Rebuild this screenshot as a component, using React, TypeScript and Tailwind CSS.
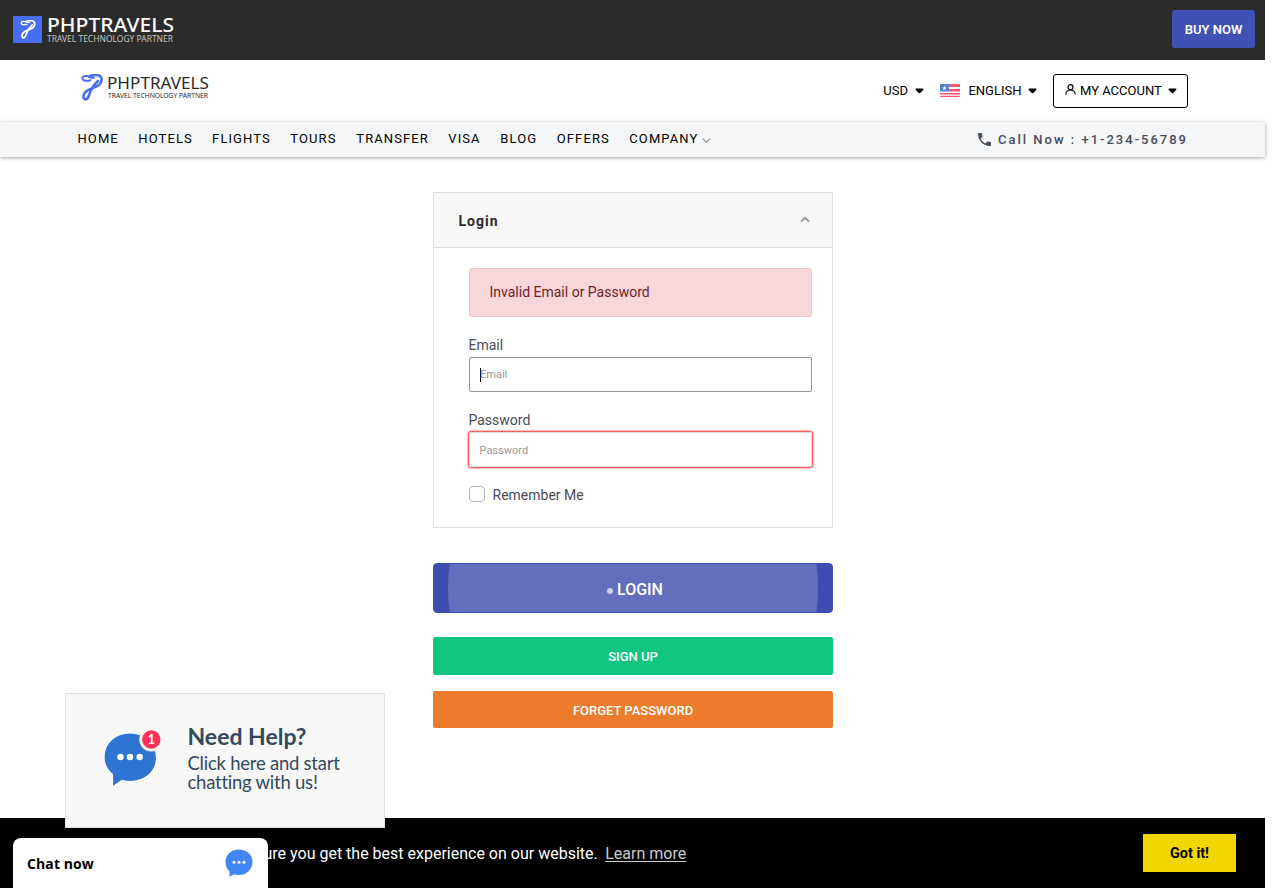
import React from "react";

const navItems = [
  { label: "HOME", left: "w-[60.8px]" },
  { label: "HOTELS", left: "w-[73.8px]" },
  { label: "FLIGHTS", left: "w-[78.2px]" },
  { label: "TOURS", left: "w-[66px]" },
  { label: "TRANSFER", left: "w-[92px]" },
  { label: "VISA", left: "w-[52px]" },
  { label: "BLOG", left: "w-[56.500px]" },
  { label: "OFFERS", left: "w-[72.500px]" },
];

function LogoMark({ className }: { className: string }) {
  return (
    <svg viewBox="0 0 22 27" className={className} fill="none" stroke="currentColor" strokeLinecap="round" strokeLinejoin="round">
      <path d="M9.500 6.200C6.500 7 3.500 7.300 2 5.600C.3 3.500 2.500 1.600 5.300 2C8.500 2.500 10.500 4.300 13 3.700" strokeWidth="2" />
      <path d="M8.500 2.200C12 .9 17 .6 19.400 2.400C21.500 4.200 20.700 9 17.500 11.300C13.500 14.300 7.500 14.500 4.200 18.300C2 21 1.700 24.700 4 25.300C6.500 25.900 7.300 23.500 8.300 20.500C9.700 16 11.500 12 17 7" strokeWidth="2.600" />
    </svg>
  );
}

function Caret() {
  return (
    <svg className="h-[6px] w-[9px]" viewBox="0 0 9 6" fill="currentColor">
      <path d="M1.3.5h6.4c.8 0 1.1.8.5 1.4L5.2 5c-.4.4-1 .4-1.4 0L.8 1.900C.2 1.300.5.5 1.300.5z" />
    </svg>
  );
}

function Flag() {
  return (
    <svg className="mt-[-1px] h-[13px] w-5" viewBox="0 0 20 13">
      <rect width="20" height="13" rx="1" fill="#fff" />
      <path d="M0 1a1 1 0 0 1 1-1h18a1 1 0 0 1 1 1v2H0zM9 5h11v2.500H9zM0 9h20v1.600H0zM0 11.700h20v.3a1 1 0 0 1-1 1H1a1 1 0 0 1-1-1z" fill="#f55867" />
      <path d="M0 1a1 1 0 0 1 1-1h8v7.500H0z" fill="#4a86dc" />
      <path d="m4.500 1.700.7 1.700h1.700L5.500 4.400 6.100 6.200 4.500 5.100 2.900 6.200l.6-1.800L2.100 3.400h1.700z" fill="#fff" />
    </svg>
  );
}

export default function App() {
  return (
    <div className="relative flex h-[888px] w-[1282px] flex-col overflow-hidden bg-white font-['Roboto',sans-serif]">
      <header className="flex h-[60px] w-[1265px] shrink-0 items-center justify-between bg-[#2b2b2b] pr-[10px] pl-[13px]">
        <div className="mt-[-2px] flex items-center">
          <div className="flex h-[27px] w-[29px] items-center justify-center bg-[#466df2] text-white">
            <LogoMark className="h-[19px] w-[16px]" />
          </div>
          <svg className="ml-[5px] h-[36px] w-[130px]" viewBox="0 -5 130 36" fill="#fff" fontFamily="Noto Sans, sans-serif">
            <text x="0" y="16" fontSize="19" fontWeight="500" textLength="127" lengthAdjust="spacingAndGlyphs">PHPTRAVELS</text>
            <text x="0" y="26" fontSize="8" fill="#c4c4c4" textLength="126" lengthAdjust="spacingAndGlyphs">TRAVEL TECHNOLOGY PARTNER</text>
          </svg>
        </div>
        <button className="mt-[-2px] h-[38px] w-[83px] rounded-[3px] bg-[#3f51b5] pt-px text-[13px] font-semibold text-white">BUY NOW</button>
      </header>

      <div className="flex h-[62px] w-[1265px] shrink-0 items-center justify-between pr-[77px] pl-[81px] text-[13px] text-black">
        <div className="mt-[-8px] flex items-center">
          <LogoMark className="h-[27px] w-[22px] text-[#466df2]" />
          <svg className="ml-[4px] h-[30px] w-[104px]" viewBox="0 0 104 30" fill="#2b2b2b" fontFamily="Noto Sans, sans-serif">
            <text x="0" y="17" fontSize="17" textLength="102" lengthAdjust="spacingAndGlyphs">PHPTRAVELS</text>
            <text x="1" y="26" fontSize="6.500" textLength="100" lengthAdjust="spacingAndGlyphs">TRAVEL TECHNOLOGY PARTNER</text>
          </svg>
        </div>
        <div className="flex items-center">
          <div className="flex items-center gap-[7px]"><span>USD</span><Caret /></div>
          <div className="ml-4 flex items-center"><Flag /><span className="mr-[6.500px] ml-[8.500px]">ENGLISH</span><Caret /></div>
          <button className="ml-4 flex h-[34px] w-[135px] items-center rounded-[3px] border border-black pl-[11px]">
            <svg className="mt-[-3px] mr-1 h-[11px] w-[11px]" viewBox="0 0 11 11" fill="none" stroke="currentColor" strokeWidth="1.200">
              <circle cx="5.500" cy="3.200" r="2.500" />
              <path d="M.8 10.500C.8 7.400 3 6 5.500 6s4.700 1.400 4.700 4.500" />
            </svg>
            <span className="mr-[6px] whitespace-nowrap">MY ACCOUNT</span><Caret />
          </button>
        </div>
      </div>

      <nav className="flex h-[35px] w-[1265px] shrink-0 items-center bg-[#f4f6f8] pr-[77px] pl-[77.500px] text-[13px] text-black shadow-[0_1px_4px_rgba(0,0,0,0.35)]">
        {navItems.map((item) => (
          <a key={item.label} className={`${item.left} mt-[-2px] shrink-0 tracking-[1.1px]`}>{item.label}</a>
        ))}
        <a className="mt-[-2px] flex items-center tracking-[1.1px]">
          COMPANY
          <svg className="mt-[3px] ml-[3.500px] h-[5px] w-[9px]" viewBox="0 0 9 5" fill="none" stroke="#999" strokeWidth="1.300"><path d="m.7.6 3.800 3.600L8.300.6" /></svg>
        </a>
        <div className="ml-auto flex items-center text-[#494b5b]">
          <svg className="mr-[7px] h-[13px] w-[13px]" viewBox="3 3 18 18" fill="currentColor"><path d="M6.620 10.790c1.440 2.830 3.760 5.140 6.590 6.590l2.200-2.200c.27-.27.67-.36 1.020-.24 1.120.37 2.330.57 3.570.57.55 0 1 .45 1 1V20c0 .55-.45 1-1 1C10.610 21 3 13.390 3 4c0-.55.45-1 1-1h3.500c.55 0 1 .45 1 1 0 1.250.2 2.450.57 3.570.11.35.03.74-.25 1.020z" /></svg>
          <span className="text-[13px] font-medium tracking-[2px]">Call Now : +1-234-56789</span>
        </div>
      </nav>

      <main className="ml-[433px] w-[400px] pt-[35px] text-sm text-[#494b5b]">
        <section className="h-[336px] border border-[#dfdfdf]">
          <div className="flex h-[55px] items-center justify-between border-b border-[#dfdfdf] bg-[#f7f7f7] pr-[22px] pl-[24.500px]">
            <h1 className="pt-[2px] text-[14px] font-bold tracking-[1px] text-[#2b2b2b]">Login</h1>
            <svg className="mt-[-1px] h-[7px] w-[10px]" viewBox="0 0 10 7" fill="none" stroke="#999" strokeWidth="2"><path d="m1 5.600 4-3.800 4 3.800" /></svg>
          </div>
          <div className="pt-5 pr-5 pl-[35px]">
            <div className="flex h-[49px] items-center rounded-[3px] border border-[#f5c6cb] bg-[#f8d7da] pb-[2px] pl-[19.500px] text-[#721c24]">Invalid Email or Password</div>
            <label className="mt-[17px] -ml-[0.5px] block h-[23px] leading-[23px]">Email</label>
            <div className="flex h-[35px] items-center rounded-[2px] border border-[#999] pt-px pl-[10px] text-[11px] text-[#999]">
              <span className="-mr-px h-[14px] w-px bg-black" />Email
            </div>
            <label className="mt-[17px] -ml-[0.5px] block h-[23px] leading-[23px]">Password</label>
            <div className="flex h-[35px] items-center rounded-[2px] border border-[#ddd] pt-[2px] pl-[9.500px] text-[11px] text-[#999] shadow-[0_0_2px_1px_#ff2222]">Password</div>
            <div className="mt-[18px] flex h-5 items-center gap-[7.500px]">
              <span className="mb-[2px] h-4 w-4 rounded-[4px] border border-[#adb5bd]" />
              <span>Remember Me</span>
            </div>
          </div>
        </section>
        <button className="mt-[35px] flex h-[50px] w-full items-center justify-center overflow-hidden rounded-[4px] border border-[#3f51b5] bg-[#3d4db0] text-[16px] font-medium text-white">
          <span className="flex h-[370px] w-[370px] shrink-0 items-center justify-center rounded-full bg-[#636fbc] pl-[4px]">
            <span className="mt-[5px] mr-1 h-[6px] w-[6px] rounded-full bg-[#cbd0ea]" /><span className="pt-[4px]">LOGIN</span>
          </span>
        </button>
        <button className="mt-6 block h-[38px] w-full rounded-[2px] bg-[#11c581] pt-[2px] text-[13px] font-medium text-white">SIGN UP</button>
        <button className="mt-4 block h-[37px] w-full rounded-[2px] bg-[#ec7b2d] pt-[3px] text-[13px] font-medium text-white">FORGET PASSWORD</button>
      </main>

      <footer className="absolute bottom-0 left-0 flex h-[70px] w-[1265px] items-center bg-black pr-[29px] pl-[263.500px] text-[16px] text-white">
        <p className="pt-[2px]">ure you get the best experience on our website.</p>
        <a className="ml-[7.500px] pt-[2px] text-[#ccc] underline underline-offset-2">Learn more</a>
        <button className="ml-auto h-[38px] w-[93px] bg-[#f1d600] pt-px text-[14.400px] font-bold text-black">Got it!</button>
      </footer>

      <aside className="absolute top-[693px] left-[65px] flex h-[135px] w-[320px] border border-[#e0e0e0] bg-[#f7f7f7] font-['Lato',sans-serif] text-[#34495e]">
        <svg className="mt-[34px] ml-[37px] h-[62px] w-[62px]" viewBox="0 0 62 62">
          <path d="M27 5C42 5 53.500 15 53.500 29.500S42 53.500 27 53.500c-3 0-5.500-.4-8-1.200L9.500 59V46.500C4 42 1 36.500 1 29.500 1 15 12 5 27 5z" fill="#2d74d3" stroke="#fff" strokeWidth="1.200" />
          <circle cx="17.500" cy="29" r="3.200" fill="#fff" /><circle cx="27" cy="29" r="3.200" fill="#fff" /><circle cx="36.700" cy="29" r="3.200" fill="#fff" />
          <circle cx="48.300" cy="11.500" r="12" fill="#f7f7f7" />
          <circle cx="48.300" cy="11.500" r="9.200" fill="#fd3156" />
          <text x="48.300" y="16" textAnchor="middle" fontSize="12.500" fontWeight="700" fill="#fff">1</text>
        </svg>
        <div className="mt-[27px] ml-[22.500px]">
          <h2 className="text-[23px] leading-[30px] font-bold">Need Help?</h2>
          <p className="mt-[3px] text-[18.500px] leading-[19px] tracking-[-0.24px] whitespace-nowrap">Click here and start<br />chatting with us!</p>
        </div>
      </aside>
      <div className="absolute top-[838px] left-[13px] flex h-[50px] w-[255px] items-center justify-between rounded-t-[8px] bg-white pr-[15px] pl-[14px] font-['Open_Sans',sans-serif] text-[14px] font-bold text-black">
        <span className="tracking-[0.1px]">Chat now</span>
        <svg className="h-7 w-7" viewBox="0 0 28 28">
          <path d="M14 .5C21.800.5 27.500 6 27.500 13S21.800 26 14 26c-1.700 0-3.200-.3-4.700-.8L4.500 27.700v-5.300C2 20 .5 16.800.5 13 .5 6 6.200.5 14 .5z" fill="#4285f4" />
          <circle cx="9" cy="13.200" r="1.500" fill="#fff" /><circle cx="14" cy="13.200" r="1.500" fill="#fff" /><circle cx="19" cy="13.200" r="1.500" fill="#fff" />
        </svg>
      </div>
    </div>
  );
}
